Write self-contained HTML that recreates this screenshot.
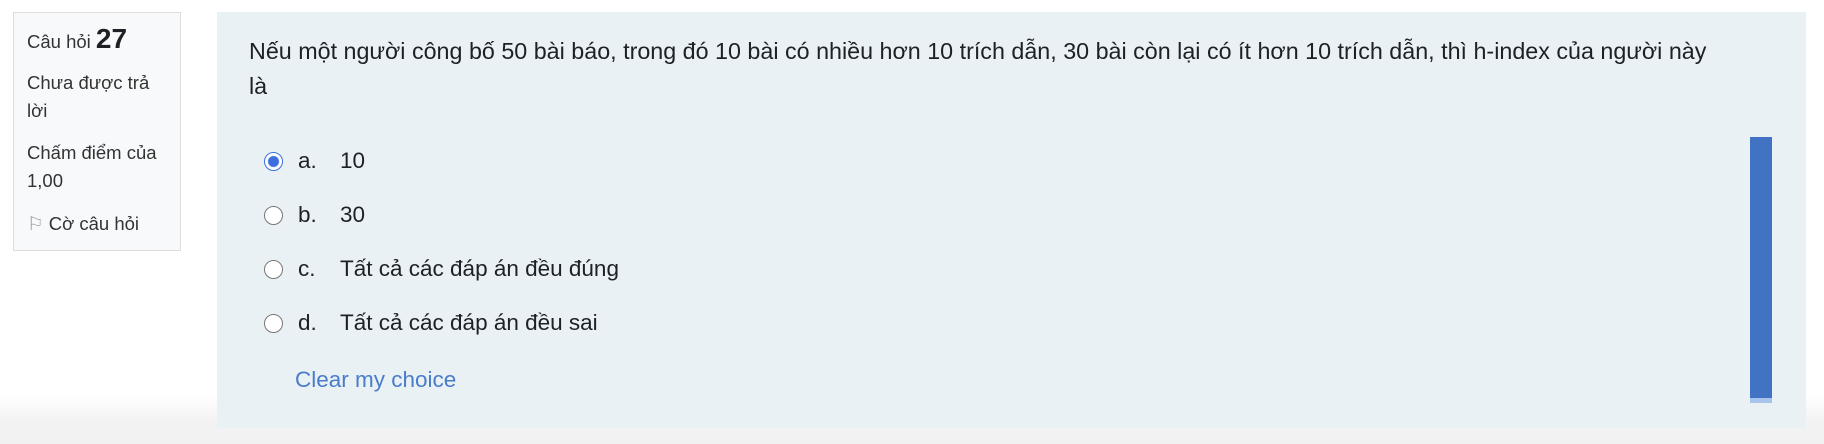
<!DOCTYPE html>
<html><head><meta charset="utf-8"><style>
body{margin:0;width:1824px;height:444px;background:linear-gradient(#fff 0,#fff 395px,#f3f3f3 420px,#f1f1f1 444px);font-family:"Liberation Sans",sans-serif;color:#222;position:relative;overflow:hidden}
.info{position:absolute;left:13px;top:12px;width:168px;height:239px;border:1px solid #ddd;background:#f8f9fa;font-size:18.5px;color:#333;box-sizing:border-box}
.info div{position:absolute;left:13px;white-space:nowrap}
.main{position:absolute;left:217px;top:12px;width:1589px;height:416px;background:#e9f1f5}
.q{position:absolute;left:32px;top:22px;width:1520px;font-size:23.3px;line-height:35px;color:#1d2125}
.opt{position:absolute;left:56px;font-size:22.5px;color:#1d2125}
.r{position:absolute;left:-9px;top:4px;width:19px;height:19px;border:1.5px solid #777;border-radius:50%;box-sizing:border-box;background:#fff}
.r.on{border-color:#3b6fe0;background:radial-gradient(circle,#3b6fe0 0 5px,#fff 6px)}
.l{position:absolute;left:25px;top:0}
.t{position:absolute;left:67px;top:0;white-space:nowrap}
.bar{position:absolute;left:1533px;top:125px;width:22px;height:261px;background:#4272c4}
.bar2{position:absolute;left:1533px;top:386px;width:22px;height:5px;background:#a9c4ec}
</style></head><body>
<div class="info">
<div style="top:10px">Câu hỏi <b style="font-size:28px;color:#1d2125">27</b></div>
<div style="top:56px;line-height:28px">Chưa được trả<br>lời</div>
<div style="top:126px;line-height:28px">Chấm điểm của<br>1,00</div>
<div style="top:200px"><span style="color:#999">⚐</span> Cờ câu hỏi</div>
</div>
<div class="main">
<div class="q">Nếu một người công bố 50 bài báo, trong đó 10 bài có nhiều hơn 10 trích dẫn, 30 bài còn lại có ít hơn 10 trích dẫn, thì h-index của người này<br>là</div>
<div class="opt" style="top:136px"><span class="r on"></span><span class="l">a.</span><span class="t">10</span></div>
<div class="opt" style="top:190px"><span class="r"></span><span class="l">b.</span><span class="t">30</span></div>
<div class="opt" style="top:244px"><span class="r"></span><span class="l">c.</span><span class="t">Tất cả các đáp án đều đúng</span></div>
<div class="opt" style="top:298px"><span class="r"></span><span class="l">d.</span><span class="t">Tất cả các đáp án đều sai</span></div>
<div class="opt" style="top:355px;left:78px;color:#4a7cc9">Clear my choice</div>
<div class="bar"></div><div class="bar2"></div>
</div>
</body></html>
